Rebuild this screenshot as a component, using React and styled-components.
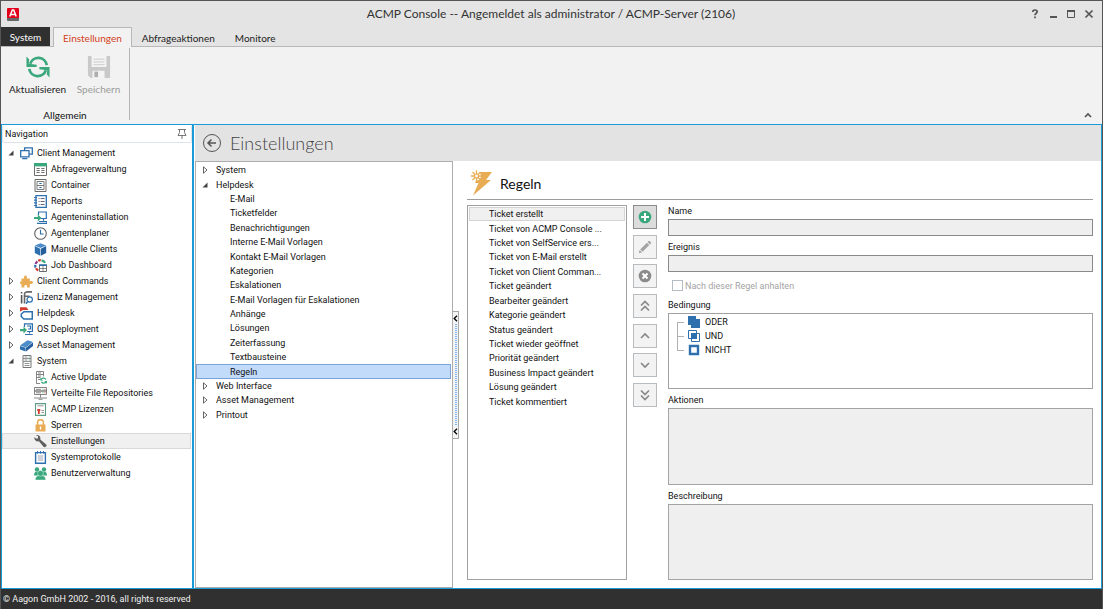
import React, { useState } from 'react';
import styled, { createGlobalStyle } from 'styled-components';

const BLUE = '#2e6fae';
const GREEN = '#3aa87c';
const GRAY = '#6c6c6c';
const ORANGE = '#e8ac54';
const RED = '#d23b2c';

const GlobalStyle = createGlobalStyle`
  * {
    box-sizing: border-box;
  }
  body {
    margin: 0;
    font-family: Roboto, "Liberation Sans", sans-serif;
    font-size: 9px;
    color: #111;
  }
  button, input, textarea {
    font: inherit;
    color: inherit;
  }
  button {
    padding: 0;
    border: 0;
    background: none;
  }
  ul {
    margin: 0;
    padding: 0;
    list-style: none;
  }
  svg {
    display: block;
    flex: none;
  }
`;

const Window = styled.div`
  display: flex;
  flex-direction: column;
  height: 100vh;
  border: 1px solid #555;
  border-bottom: 0;
  background: #e4e4e4;
`;

const TitleBar = styled.header`
  display: grid;
  grid-template-columns: 1fr auto 1fr;
  align-items: center;
  height: 26px;
  padding: 0 7px 0 6px;
  font-family: Lato, "Open Sans", sans-serif;
`;
TitleBar.Title = styled.h1`
  margin: 0;
  font-size: 12px;
  font-weight: normal;
  line-height: 26px;
  color: #333;
`;
TitleBar.Controls = styled.div`
  display: flex;
  justify-content: flex-end;
  gap: 6px;
`;
TitleBar.Button = styled.button`
  display: flex;
  align-items: center;
  justify-content: center;
  width: 12px;
  height: 12px;
`;

const TabBar = styled.div`
  display: flex;
  height: 20px;
  font-family: Lato, "Open Sans", sans-serif;
  font-size: 10px;
  border-bottom: 1px solid #b8b8b8;
`;
const SystemTab = styled.button`
  width: 49px;
  margin-right: 3px;
  background: #303030;
  color: #fff;
`;
const Tab = styled.button`
  height: 20px;
  padding: 0 9px;
  border: 1px solid transparent;
  border-bottom: 0;
  color: #222;
  ${props => props.$active ? `
    background: #f2f2f2;
    border-color: #b8b8b8;
    color: #d23f23;
  ` : ''}
`;

const Ribbon = styled.div`
  display: flex;
  align-items: flex-end;
  justify-content: space-between;
  height: 77px;
  padding-right: 10px;
  background: #f2f2f2;
  font-family: Lato, "Open Sans", sans-serif;
  font-size: 10px;
`;
Ribbon.Group = styled.section`
  display: flex;
  flex-direction: column;
  align-self: flex-start;
  justify-content: space-between;
  height: 72px;
  width: 129px;
  margin-top: 1px;
  border-right: 1px solid #b4b4b4;
`;
Ribbon.Buttons = styled.div`
  display: flex;
  padding: 7px 0 0 6px;
`;
Ribbon.Button = styled.button`
  display: flex;
  flex-direction: column;
  align-items: center;
  gap: 3px;
  width: 61px;
  flex: none;
  line-height: 14px;
  color: #222;
  &:disabled {
    color: #9b9b9b;
  }
`;
Ribbon.Caption = styled.div`
  line-height: 14px;
  margin-bottom: -2px;
  text-align: center;
`;
Ribbon.Collapse = styled.button`
  margin-bottom: 6px;
`;

const Workspace = styled.div`
  display: flex;
  flex: 1;
  min-height: 0;
  border: 1px solid #1b9ad8;
  background: #fff;
`;

const NavPanel = styled.nav`
  width: 192px;
  flex: none;
  border-right: 2px solid #1b9ad8;
`;
NavPanel.Header = styled.div`
  display: flex;
  align-items: center;
  justify-content: space-between;
  height: 18px;
  margin-bottom: 2px;
  padding: 1px 4px 0 2px;
  border: 1px solid #dfe3ea;
  border-top: 0;
  border-radius: 2px;
`;

const NavItem = styled.button`
  display: flex;
  align-items: center;
  gap: 4px;
  width: calc(100% - 1px);
  height: 16px;
  padding-left: ${props => props.$child ? '31px' : '3px'};
  border: 1px solid ${props => props.$active ? '#d9d9d9' : 'transparent'};
  background: ${props => props.$active ? '#f0f0f0' : 'transparent'};
  white-space: nowrap;
`;
const ArrowBox = styled.span`
  display: flex;
  justify-content: center;
  width: 10px;
`;

const Main = styled.main`
  display: flex;
  flex-direction: column;
  flex: 1;
  min-width: 0;
  padding-left: 1px;
`;
const PageHeader = styled.div`
  display: flex;
  align-items: center;
  gap: 8px;
  height: 36px;
  padding-left: 7px;
  background: #e3e3e3;
`;
PageHeader.Title = styled.h2`
  margin: 0;
  font-family: Lato, "Open Sans", sans-serif;
  font-size: 18px;
  font-weight: 300;
  color: #444;
`;

const Panels = styled.div`
  display: flex;
  flex: 1;
  min-height: 0;
`;

const SettingsTree = styled.div`
  width: 258px;
  flex: none;
  border: 1px solid #acacac;
  padding: 1px 1px 0 0;
`;
SettingsTree.List = styled.ul`
  display: grid;
  grid-auto-rows: 1fr;
  height: 259px;
`;
SettingsTree.Item = styled.button`
  display: flex;
  align-items: center;
  gap: 6px;
  width: 100%;
  height: 100%;
  padding-left: ${props => props.$child ? '33px' : '3px'};
  border: 1px solid ${props => props.$active ? '#7ba3d6' : 'transparent'};
  background: ${props => props.$active ? '#c3dbfb' : 'transparent'};
`;

const Splitter = styled.div`
  display: flex;
  flex-direction: column;
  align-items: center;
  justify-content: space-between;
  align-self: center;
  width: 6px;
  height: 128px;
  padding: 3px 0;
  border: 1px solid #a8a8a8;
  border-left: 0;
  background: #f4f4f4;
`;
Splitter.Dots = styled.div`
  flex: 1;
  width: 2px;
  margin: 2px 0;
  background: repeating-linear-gradient(#7db3ee 0 1px, #f4f4f4 1px 2px);
`;

const RulePane = styled.section`
  display: flex;
  flex-direction: column;
  flex: 1;
  min-width: 0;
  padding: 0 8px 8px;
`;
RulePane.Header = styled.div`
  display: flex;
  align-items: center;
  gap: 8px;
  height: 39px;
  margin-bottom: 5px;
  padding: 6px 0 0 3px;
  border-bottom: 1px solid #9c9c9c;
`;
RulePane.Title = styled.h3`
  margin: 0;
  font-family: Lato, "Open Sans", sans-serif;
  font-size: 14px;
  font-weight: normal;
`;
RulePane.Body = styled.div`
  display: grid;
  grid-template-columns: 160px 24px 1fr;
  column-gap: 6px;
  flex: 1;
  min-height: 0;
`;

const RuleList = styled.div`
  border: 1px solid #a0a0a0;
  padding: 1px;
`;
RuleList.Items = styled.ul`
  display: grid;
  grid-auto-rows: 1fr;
  height: 202px;
`;
RuleList.Item = styled.button`
  width: 100%;
  height: 100%;
  padding-left: 19px;
  text-align: left;
  white-space: nowrap;
  border: 1px solid ${props => props.$active ? '#d4d4d4' : 'transparent'};
  background: ${props => props.$active ? '#f0f0f0' : 'transparent'};
`;

const ActionColumn = styled.div`
  display: flex;
  flex-direction: column;
  justify-content: space-between;
  height: 202px;
`;
const ActionButton = styled.button`
  display: flex;
  align-items: center;
  justify-content: center;
  height: 24px;
  border: 1px solid #b9bcbe;
  background: #f3f3f3;
  ${props => props.$primary ? `
    border-color: #8c8c8c;
    background: #dcdcdc;
  ` : ''}
`;

const Form = styled.form`
  display: flex;
  flex-direction: column;
  gap: 5px;
  padding-left: 5px;
`;
const Field = styled.div`
  display: flex;
  flex-direction: column;
  ${props => props.$grow ? 'flex: 1;' : ''}
  label, span {
    line-height: 12px;
    padding-bottom: 2px;
  }
`;
const TextInput = styled.input`
  height: 17px;
  padding: 0 3px;
  border: 1px solid #8a8a8a;
  border-radius: 0;
  background: #efefef;
`;
const TextArea = styled.textarea`
  flex: 1;
  min-height: 0;
  padding: 2px;
  border: 1px solid #a4a4a4;
  border-radius: 0;
  background: #efefef;
  resize: none;
`;
const CheckLabel = styled.label`
  display: flex;
  align-items: center;
  gap: 2px;
  height: 17px;
  padding-left: 4px;
  color: #a3a3a3;
`;
const CheckBox = styled.input`
  appearance: none;
  width: 11px;
  height: 11px;
  margin: 0;
  border: 1px solid #b5bcc4;
  background: #fff;
`;

const ConditionTree = styled.ul`
  flex: 1;
  padding: 1px 0 0 8px;
  border: 1px solid #a0a0a0;
`;
ConditionTree.Item = styled.li`
  display: flex;
  align-items: center;
  gap: 4px;
  height: 14px;
  &::before {
    content: '';
    width: 7px;
    height: 14px;
    margin-right: -1px;
    background:
      linear-gradient(#b0b0b0, #b0b0b0) 0 ${props => props.$first ? '7px' : '0'} / 1px ${props => props.$last ? '7px' : '100%'} no-repeat,
      linear-gradient(#b0b0b0, #b0b0b0) 0 7px / 7px 1px no-repeat;
  }
`;

const StatusBar = styled.footer`
  height: 20px;
  padding: 0 2px;
  line-height: 20px;
  background: #303030;
  color: #f0f0f0;
`;

// 13px glyphs for the navigation tree
const glyphs = {
  clients: (
    <g fill="#fff" stroke={BLUE} strokeWidth="1.3">
      <path d="M4.6.8h7.7v6.4H4.6z" />
      <path d="M.7 3.7h8.3v6.2H.7z" />
      <path d="M2.200 11.600h5.200" />
    </g>
  ),
  table: (
    <g>
      <path d="M.5.5h12v12H.5z" fill="#fff" stroke={GRAY} />
      <path d="M0 0h13v3.4H0z" fill={GREEN} />
      <path d="M2.500 5.500h3.200M7.300 5.500h3.200M2.500 7.500h3.200M7.300 7.500h3.200M2.500 9.500h3.200M7.300 9.500h3.200" stroke={GRAY} />
    </g>
  ),
  container: (
    <g fill="none" stroke={GRAY}>
      <path d="M1 .5h11v12H1z" />
      <path d="M3 2.5h7v8H3zM3 6.5h7" strokeWidth=".9" />
      <path d="M5.3 4.5h2.4M5.3 8.5h2.4" stroke={BLUE} />
    </g>
  ),
  report: (
    <g fill="none" stroke={BLUE}>
      <path d="M2 .7h10.3v11.6H2z" strokeWidth="1.3" />
      <path d="M0 2.5h3M0 5.2h3M0 7.9h3M0 10.5h3" strokeWidth="1.2" />
      <path d="M4.6 3.5h1M4.6 6.5h1M4.6 9.5h1M6.6 3.5h4M6.6 6.5h4M6.6 9.5h4" stroke="#556" strokeWidth=".9" />
    </g>
  ),
  install: (
    <g fill="none">
      <path d="M4.5 4V1h7.8v6.5H6.5M9.5 7.5v2.3M5 10.5h7.8v1.8H3" stroke={BLUE} strokeWidth="1.2" />
      <path d="M0 6h3.8V3.4L7.5 7l-3.7 3.500V8H0z" fill={GREEN} />
    </g>
  ),
  clock: (
    <g fill="none">
      <circle cx="6.5" cy="6.5" r="5.8" stroke="#5f5f5f" strokeWidth="1.1" />
      <path d="M6.5 2.8v4.2h3.2" stroke={BLUE} strokeWidth="1.1" />
    </g>
  ),
  cube: (
    <g>
      <path d="M6.5.2l5.7 2.3-5.7 2.6L.8 2.5z" fill="#4d8cc9" />
      <path d="M.8 3.1L6.2 5.7v7.1L.8 10z" fill={BLUE} />
      <path d="M12.2 3.1L6.8 5.7v7.1l5.4-2.8z" fill="#245f9c" />
    </g>
  ),
  dashboard: (
    <g fill="none">
      <path d="M1.6 8.5a5 5 0 0 1-.3-2.6" stroke="#2e6fae" strokeWidth="2.2" />
      <path d="M1.6 5A5 5 0 0 1 3.4 2.3" stroke="#8d3a8f" strokeWidth="2.2" />
      <path d="M4.2 1.8A5 5 0 0 1 6.8 1.2" stroke={RED} strokeWidth="2.2" />
      <path d="M7.6 1.3a5 5 0 0 1 3.5 2.5" stroke={GREEN} strokeWidth="2.2" />
      <path d="M2 9.3a5 5 0 0 0 2.3 2.2" stroke={RED} strokeWidth="2.2" />
      <path d="M5.5 6h7v6.5h-7z" fill="#fff" stroke={GRAY} />
      <path d="M5 6.2h8" stroke={BLUE} strokeWidth="1.6" />
      <path d="M9 7v5.500M5.500 9.500h7" stroke={GRAY} strokeWidth=".8" />
    </g>
  ),
  puzzle: (
    <path d="M1.5 3.5h2.8C3.6 2 4.2.4 5.5.4S7.4 2 6.8 3.5h3v2.8c1.5-.7 3.2-.1 3.2 1.2S11.3 9.400 9.800 8.700v3.800H7c.5-1.500 0-2.600-1.300-2.600S3.900 11 4.500 12.500h-3V9C.8 9.500 0 9 0 7.800s.8-1.700 1.500-1.200z" fill={ORANGE} />
  ),
  license: (
    <g fill="none">
      <path d="M1.6 4v8.500M1.600 1v1.500" stroke="#555" strokeWidth="1.600" />
      <path d="M4.500 12.500V3.500C4.500 1.500 6 .9 8 .9h4M4.500 5.200h5" stroke="#666" strokeWidth="1.600" />
      <circle cx="9.700" cy="8.500" r="2.700" fill="#fff" stroke={BLUE} strokeWidth="1.200" />
      <path d="M7.800 10.500L6 12.600" stroke={BLUE} strokeWidth="1.600" />
    </g>
  ),
  helpdesk: (
    <g fill="none">
      <path d="M0 4.500V.3h6.500l2 2.700H3z" fill={RED} />
      <path d="M4 4.700h8.300v7.300H3.800L1.300 9.500V7z" stroke={BLUE} strokeWidth="1.500" fill="#fff" />
    </g>
  ),
  deploy: (
    <g fill="none">
      <path d="M4.5 4V.9h7.900v7.600H7M9.500 8.500v2M5 11.500h7.800M7 3h3.500v3H8" stroke={BLUE} strokeWidth="1.200" />
      <path d="M0 6h3.500V3.600L7 7.100l-3.500 3.400V8.200H0z" fill={GREEN} />
    </g>
  ),
  asset: (
    <g>
      <path d="M0 6.400L7.500 1.200 13 3 5.800 8.400z" fill="#4d8cc9" />
      <path d="M0 6.900l5.600 1.900v3.600L0 10.400z" fill={BLUE} />
      <path d="M13 3.600L6 8.800v3.600l7-5.400z" fill="#245f9c" />
    </g>
  ),
  server: (
    <g fill="none" stroke="#777">
      <path d="M3 .5h8v12H3z" />
      <path d="M3 3.500h8M3 6.500h8M4.500 2h3M4.500 5h3M4.500 8.500h5M4.500 10.500h5" strokeWidth=".8" />
      <path d="M8.800 2h1M8.800 5h1" stroke={GREEN} />
    </g>
  ),
  update: (
    <g fill="none">
      <path d="M6 12.500H2.500V.5h7v5M2.500 3.500h7M2.500 6.500h4M4 2h3M4 5h3M4 8.500h2" stroke="#777" strokeWidth=".9" />
      <path d="M7 8.800a2.900 2.900 0 0 1 5-.3M12.300 10.500a2.900 2.900 0 0 1-5 .4" stroke={GREEN} strokeWidth="1.300" />
      <path d="M6.300 6.800v2.800h2.800zM13 12.700V9.900h-2.800z" fill={GREEN} />
    </g>
  ),
  repository: (
    <g fill="none" stroke="#777">
      <path d="M.5.5h12V4H.5zM.5 4h12v3.500H.5zM6.500 7.500v3M0 11h13M4.500 12.300h4" strokeWidth=".9" />
      <path d="M2 2.300h5M2 5.800h5" strokeWidth=".9" />
      <path d="M8.500 2.300h1M8.500 5.800h1" stroke={GREEN} />
      <path d="M10.500 2.300h1M10.500 5.800h1" stroke={RED} />
    </g>
  ),
  licenseFile: (
    <g fill="none">
      <path d="M1.5.6h10v11.800h-10z" stroke="#5c9d83" strokeWidth="1.100" />
      <path d="M3.500 2.800h6" stroke="#888" strokeWidth=".9" />
      <path d="M4.800 11V7.500M3.300 7h3" stroke={RED} strokeWidth="1.800" />
      <path d="M7.500 7.500H10M7.500 9.500H10" stroke="#888" strokeWidth=".9" />
    </g>
  ),
  lock: (
    <g fill="none">
      <path d="M3.6 6V3.6a2.900 2.900 0 0 1 5.800 0V6" stroke={ORANGE} strokeWidth="1.500" />
      <path d="M1.500 5.500h10v7h-10z" fill={ORANGE} />
      <path d="M6.500 7.500v3" stroke="#fff" strokeWidth="1.400" />
    </g>
  ),
  wrench: (
    <path d="M.3 2.200l2.200 1.600L4 3.200 4 1.300 2 .2C4-.3 6.300.9 6.400 3.200l-.1 1.300 5.900 4.900c1.300 1.200-.9 3.800-2.400 2.600L4.900 6.300C2.600 7 .1 5.300.3 2.200z" fill="#5e5e5e" />
  ),
  protocol: (
    <g fill="none">
      <path d="M1.6 1.6h9.800v10.700H1.600z" stroke={BLUE} strokeWidth="1.400" />
      <path d="M3.500 0v2.600M6.500 0v2.600M9.500 0v2.600" stroke={BLUE} />
      <path d="M3.800 5h5.400M3.800 7h5.400M3.800 9h5.400" stroke="#99a" strokeWidth=".9" />
    </g>
  ),
  users: (
    <g fill={GREEN}>
      <circle cx="3" cy="2.400" r="2.200" />
      <circle cx="10" cy="2.400" r="2.200" />
      <path d="M0 8.500c0-2.500 1.200-4 3-4h7c1.800 0 3 1.500 3 4z" />
      <path d="M1.300 13c0-3.300 1.800-4.500 5.200-4.500s5.200 1.200 5.200 4.500z" stroke="#fff" strokeWidth=".4" />
      <circle cx="6.500" cy="6.300" r="2.900" stroke="#fff" strokeWidth=".4" />
    </g>
  ),
};

const NavIcon = ({ name }) => (
  <svg width="13" height="13" viewBox="0 0 13 13" aria-hidden="true">{glyphs[name]}</svg>
);

const TreeArrow = ({ open }) => (
  <ArrowBox>
    <svg width="6" height="8" viewBox="0 0 6 8" aria-hidden="true">
      {open
        ? <path d="M5.5 1.500v5H.5z" fill="#444" />
        : <path d="M1.500.8L5 4 1.500 7.200z" fill="#fff" stroke="#555" strokeWidth=".9" />}
    </svg>
  </ArrowBox>
);

const Chevron = ({ down, double, color = '#888' }) => (
  <svg width="14" height="14" viewBox="0 0 14 14" fill="none" stroke={color} strokeWidth="1.700" aria-hidden="true">
    <g transform={down ? 'rotate(180 7 7)' : undefined}>
      {double ? <path d="M3 6.500l4-4 4 4M3 11.500l4-4 4 4" /> : <path d="M3 9l4-4 4 4" />}
    </g>
  </svg>
);

const SplitArrow = () => (
  <svg width="5" height="7" viewBox="0 0 5 7" aria-hidden="true">
    <path d="M4 .8L1.200 3.500 4 6.200" fill="none" stroke="#000" strokeWidth="1.300" />
  </svg>
);

const navigation = [
  { label: 'Client Management', icon: 'clients', open: true },
  { label: 'Abfrageverwaltung', icon: 'table', child: true },
  { label: 'Container', icon: 'container', child: true },
  { label: 'Reports', icon: 'report', child: true },
  { label: 'Agenteninstallation', icon: 'install', child: true },
  { label: 'Agentenplaner', icon: 'clock', child: true },
  { label: 'Manuelle Clients', icon: 'cube', child: true },
  { label: 'Job Dashboard', icon: 'dashboard', child: true },
  { label: 'Client Commands', icon: 'puzzle' },
  { label: 'Lizenz Management', icon: 'license' },
  { label: 'Helpdesk', icon: 'helpdesk' },
  { label: 'OS Deployment', icon: 'deploy' },
  { label: 'Asset Management', icon: 'asset' },
  { label: 'System', icon: 'server', open: true },
  { label: 'Active Update', icon: 'update', child: true },
  { label: 'Verteilte File Repositories', icon: 'repository', child: true },
  { label: 'ACMP Lizenzen', icon: 'licenseFile', child: true },
  { label: 'Sperren', icon: 'lock', child: true },
  { label: 'Einstellungen', icon: 'wrench', child: true },
  { label: 'Systemprotokolle', icon: 'protocol', child: true },
  { label: 'Benutzerverwaltung', icon: 'users', child: true },
];

const settings = [
  { label: 'System' },
  { label: 'Helpdesk', open: true },
  { label: 'E-Mail', child: true },
  { label: 'Ticketfelder', child: true },
  { label: 'Benachrichtigungen', child: true },
  { label: 'Interne E-Mail Vorlagen', child: true },
  { label: 'Kontakt E-Mail Vorlagen', child: true },
  { label: 'Kategorien', child: true },
  { label: 'Eskalationen', child: true },
  { label: 'E-Mail Vorlagen für Eskalationen', child: true },
  { label: 'Anhänge', child: true },
  { label: 'Lösungen', child: true },
  { label: 'Zeiterfassung', child: true },
  { label: 'Textbausteine', child: true },
  { label: 'Regeln', child: true },
  { label: 'Web Interface' },
  { label: 'Asset Management' },
  { label: 'Printout' },
];

const rules = [
  'Ticket erstellt',
  'Ticket von ACMP Console ...',
  'Ticket von SelfService ers...',
  'Ticket von E-Mail erstellt',
  'Ticket von Client Comman...',
  'Ticket geändert',
  'Bearbeiter geändert',
  'Kategorie geändert',
  'Status geändert',
  'Ticket wieder geöffnet',
  'Priorität geändert',
  'Business Impact geändert',
  'Lösung geändert',
  'Ticket kommentiert',
];

const Titlebar = () => (
  <TitleBar>
    <svg width="12" height="13" viewBox="0 0 12 13" aria-hidden="true">
      <path d="M0 1a1 1 0 0 1 1-1h10a1 1 0 0 1 1 1v9H0z" fill="#e2001a" />
      <path d="M0 10h12v2a1 1 0 0 1-1 1H1a1 1 0 0 1-1-1z" fill="#666" />
      <path d="M2.800 8.600L5.300 2h1.400l2.500 6.600M4 6.600h4" fill="none" stroke="#fff" strokeWidth="1.500" />
    </svg>
    <TitleBar.Title>ACMP Console -- Angemeldet als administrator / ACMP-Server (2106)</TitleBar.Title>
    <TitleBar.Controls>
      <TitleBar.Button aria-label="Hilfe">
        <svg width="12" height="12" viewBox="0 0 12 12" fill="none" stroke="#555" strokeWidth="1.700">
          <path d="M3.800 4C3.800 2.400 4.800 2 6 2s2.200.7 2.200 1.800C8.200 5.200 6 5.300 6 7.200M6 8.500v1.700" />
        </svg>
      </TitleBar.Button>
      <TitleBar.Button aria-label="Minimieren">
        <svg width="12" height="12" viewBox="0 0 12 12"><path d="M3 8h7v2H3z" fill="#555" /></svg>
      </TitleBar.Button>
      <TitleBar.Button aria-label="Maximieren">
        <svg width="12" height="12" viewBox="0 0 12 12">
          <path d="M2.500 2.500h7v7h-7z" fill="none" stroke="#555" />
          <path d="M2 2h8v2H2z" fill="#555" />
        </svg>
      </TitleBar.Button>
      <TitleBar.Button aria-label="Schließen">
        <svg width="12" height="12" viewBox="0 0 12 12">
          <path d="M2.500 2.500l7 7M9.500 2.500l-7 7" stroke="#555" strokeWidth="1.700" />
        </svg>
      </TitleBar.Button>
    </TitleBar.Controls>
  </TitleBar>
);

const RibbonBar = () => (
  <Ribbon>
    <Ribbon.Group>
      <Ribbon.Buttons>
        <Ribbon.Button>
          <svg width="24" height="24" viewBox="0 0 26 26" fill="none" aria-hidden="true">
            <path d="M4.500 9.500a9.300 9.300 0 0 1 18 1.500M21.500 16.500A9.300 9.300 0 0 1 3.500 15" stroke={GREEN} strokeWidth="3" />
            <path d="M.5 1.500l3 3.500L3 9.500l8.500 1v2.500H.5zM25.500 24.500l-3-3.500.5-4.500-8.500-1V13h11z" fill={GREEN} />
          </svg>
          Aktualisieren
        </Ribbon.Button>
        <Ribbon.Button disabled>
          <svg width="24" height="24" viewBox="0 0 26 26" aria-hidden="true">
            <path d="M1 1h24v24H4l-3-3z" fill="#c9c9c9" />
            <path d="M5 1h16v12H5zM6 17h13v8H6z" fill="#f4f4f4" />
            <path d="M7 4.500h12M7 7.500h12M7 10.500h12" stroke="#c9c9c9" />
            <path d="M8 18h4v6H8z" fill="#aeaeae" />
          </svg>
          Speichern
        </Ribbon.Button>
      </Ribbon.Buttons>
      <Ribbon.Caption>Allgemein</Ribbon.Caption>
    </Ribbon.Group>
    <Ribbon.Collapse aria-label="Menüband einklappen">
      <svg width="8" height="6" viewBox="0 0 8 6" aria-hidden="true">
        <path d="M1 5l3-3 3 3" fill="none" stroke="#555" strokeWidth="1.700" />
      </svg>
    </Ribbon.Collapse>
  </Ribbon>
);

const Navigation = () => {
  const [active, setActive] = useState('Einstellungen');
  return (
    <NavPanel>
      <NavPanel.Header>
        Navigation
        <svg width="10" height="10" viewBox="0 0 10 10" fill="none" stroke="#777" aria-hidden="true">
          <path d="M1 .5h8M2.500.5v3L1 6.500h8L7.500 3.500v-3M5 6.500V10" />
        </svg>
      </NavPanel.Header>
      <ul>
        {navigation.map(item => (
          <li key={item.label}>
            <NavItem $child={item.child} $active={item.label === active} onClick={() => setActive(item.label)}>
              {!item.child && <TreeArrow open={item.open} />}
              <NavIcon name={item.icon} />
              {item.label}
            </NavItem>
          </li>
        ))}
      </ul>
    </NavPanel>
  );
}

const RuleForm = () => (
  <Form>
    <Field>
      <label htmlFor="name">Name</label>
      <TextInput id="name" disabled />
    </Field>
    <Field>
      <label htmlFor="event">Ereignis</label>
      <TextInput id="event" disabled />
    </Field>
    <CheckLabel>
      <CheckBox type="checkbox" disabled />
      Nach dieser Regel anhalten
    </CheckLabel>
    <Field $grow>
      <span id="condition">Bedingung</span>
      <ConditionTree aria-labelledby="condition">
        <ConditionTree.Item $first>
          <svg width="14" height="14" viewBox="0 0 14 14" fill={BLUE}>
            <path d="M1 1h8v3h4v9H4v-3H1z" />
          </svg>
          ODER
        </ConditionTree.Item>
        <ConditionTree.Item>
          <svg width="14" height="14" viewBox="0 0 14 14" fill="none" stroke={BLUE}>
            <path d="M1.500 1.500h8v8h-8zM4.500 4.500h8v8h-8z" />
            <path d="M4 4h6v6H4z" fill={BLUE} stroke="none" />
          </svg>
          UND
        </ConditionTree.Item>
        <ConditionTree.Item $last>
          <svg width="14" height="14" viewBox="0 0 14 14">
            <path d="M3 3h8v8H3z" fill="#fff" stroke={BLUE} strokeWidth="2.400" />
          </svg>
          NICHT
        </ConditionTree.Item>
      </ConditionTree>
    </Field>
    <Field $grow>
      <label htmlFor="actions">Aktionen</label>
      <TextArea id="actions" disabled />
    </Field>
    <Field $grow>
      <label htmlFor="description">Beschreibung</label>
      <TextArea id="description" disabled />
    </Field>
  </Form>
);

const Actions = () => (
  <ActionColumn>
    <ActionButton $primary aria-label="Hinzufügen">
      <svg width="14" height="14" viewBox="0 0 14 14">
        <circle cx="7" cy="7" r="6.300" fill={GREEN} />
        <path d="M7 3v8M3 7h8" stroke="#fff" strokeWidth="2" />
      </svg>
    </ActionButton>
    <ActionButton aria-label="Bearbeiten">
      <svg width="14" height="14" viewBox="0 0 14 14" fill="#a2a2a2">
        <path d="M.8 13.200l.8-3.200 2.400 2.400zM2.200 9.400l6.700-6.700 2.400 2.400-6.700 6.700zM9.600 2l.9-.9c.9-.9 3.300 1.500 2.400 2.400l-.9.9z" />
      </svg>
    </ActionButton>
    <ActionButton aria-label="Löschen">
      <svg width="14" height="14" viewBox="0 0 14 14">
        <circle cx="7" cy="7" r="6.300" fill="#8b8b8b" />
        <path d="M4.500 4.500l5 5M9.500 4.500l-5 5" stroke="#fff" strokeWidth="2" />
      </svg>
    </ActionButton>
    <ActionButton aria-label="Ganz nach oben"><Chevron double /></ActionButton>
    <ActionButton aria-label="Nach oben"><Chevron /></ActionButton>
    <ActionButton aria-label="Nach unten"><Chevron down /></ActionButton>
    <ActionButton aria-label="Ganz nach unten"><Chevron down double /></ActionButton>
  </ActionColumn>
);

export default function App() {
  const [setting, setSetting] = useState('Regeln');
  const [rule, setRule] = useState('Ticket erstellt');
  return (
    <>
      <GlobalStyle />
      <Window>
        <Titlebar />
        <TabBar>
          <SystemTab>System</SystemTab>
          <Tab $active>Einstellungen</Tab>
          <Tab>Abfrageaktionen</Tab>
          <Tab>Monitore</Tab>
        </TabBar>
        <RibbonBar />
        <Workspace>
          <Navigation />
          <Main>
            <PageHeader>
              <button aria-label="Zurück">
                <svg width="20" height="20" viewBox="0 0 20 20" fill="none" stroke="#555">
                  <circle cx="10" cy="10" r="8.500" />
                  <path d="M6 10h8M9.500 6.500L6 10l3.500 3.500" strokeWidth="1.500" />
                </svg>
              </button>
              <PageHeader.Title>Einstellungen</PageHeader.Title>
            </PageHeader>
            <Panels>
              <SettingsTree>
                <SettingsTree.List>
                  {settings.map(item => (
                    <li key={item.label}>
                      <SettingsTree.Item
                        $child={item.child}
                        $active={item.label === setting}
                        onClick={() => setSetting(item.label)}
                      >
                        {!item.child && <TreeArrow open={item.open} />}
                        {item.label}
                      </SettingsTree.Item>
                    </li>
                  ))}
                </SettingsTree.List>
              </SettingsTree>
              <Splitter>
                <SplitArrow />
                <Splitter.Dots />
                <SplitArrow />
              </Splitter>
              <RulePane>
                <RulePane.Header>
                  <svg width="22" height="26" viewBox="0 0 22 26" aria-hidden="true">
                    <path d="M10 2h12l-6 8h5L3 25.500 8.500 13H5z" fill={ORANGE} />
                    <circle cx="6.500" cy="6" r="4.500" fill="#fff" />
                    <path d="M6.500.3v11.400M.8 6h11.400M2.500 2l8 8M10.500 2l-8 8" stroke={ORANGE} strokeWidth="1.300" />
                    <circle cx="6.500" cy="6" r="2" fill="#fff" stroke={ORANGE} strokeWidth="1.200" />
                  </svg>
                  <RulePane.Title>Regeln</RulePane.Title>
                </RulePane.Header>
                <RulePane.Body>
                  <RuleList>
                    <RuleList.Items>
                      {rules.map(label => (
                        <li key={label}>
                          <RuleList.Item $active={label === rule} onClick={() => setRule(label)}>{label}</RuleList.Item>
                        </li>
                      ))}
                    </RuleList.Items>
                  </RuleList>
                  <Actions />
                  <RuleForm />
                </RulePane.Body>
              </RulePane>
            </Panels>
          </Main>
        </Workspace>
        <StatusBar>© Aagon GmbH 2002 - 2016, all rights reserved</StatusBar>
      </Window>
    </>
  );
}
